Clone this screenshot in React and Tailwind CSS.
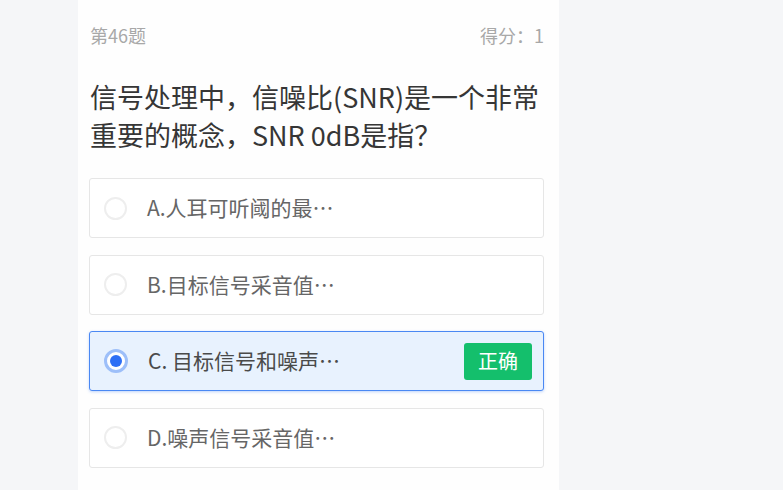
import React from 'react';

const options = [
  { key: 'A', text: 'A.人耳可听阈的最…' },
  { key: 'B', text: 'B.目标信号采音值…' },
  { key: 'C', text: 'C. 目标信号和噪声…', selected: true, correct: true },
  { key: 'D', text: 'D.噪声信号采音值…' },
];

const font = { fontFamily: '"Noto Sans CJK SC", "Noto Sans", sans-serif' };

const Option = ({ opt }) => {
  const box = opt.selected
    ? 'border-[#4a88f3] bg-[#e8f2fe] shadow-[0_1px_3px_rgba(74,136,243,0.35)]'
    : 'border-[#e6e6e6] bg-white';
  return (
    <div className={`flex items-center h-[60px] rounded-[3px] border pl-[14px] pr-[11px] ${box}`}>
      {opt.selected ? (
        <span className="flex items-center justify-center w-[24px] h-[24px] rounded-full border-[3px] border-[#9dbff9] bg-white">
          <span className="w-[12px] h-[12px] rounded-full bg-[#2d6ff5]" />
        </span>
      ) : (
        <span className="w-[23px] h-[23px] rounded-full border-2 border-[#eeeeee]" />
      )}
      <span className={`ml-[20px] text-[21px] ${opt.selected ? 'text-[#4a4a4a]' : 'text-[#666666]'}`}>
        {opt.text}
      </span>
      {opt.correct && (
        <span className="ml-auto flex items-center justify-center w-[68px] h-[37px] rounded-[3px] bg-[#14bf6c] text-white text-[20px]">
          正确
        </span>
      )}
    </div>
  );
};

const App = () => {
  return (
    <div className="w-full h-[490px] bg-[#f5f6f8] overflow-hidden" style={font}>
      <div className="ml-[78px] w-[481px] h-full bg-[#fefefe] pl-[11px] pr-[15px] pt-[24px]">
        {/* header */}
        <div className="flex items-center justify-between h-[22px] pl-[1px] text-[18px] text-[#a8a8a8]">
          <span>第46题</span>
          <span>得分：1</span>
        </div>

        {/* question */}
        <p className="mt-[32px] pl-[1px] text-[27px] leading-[38px] text-[#363636]">
          信号处理中，信噪比(SNR)是一个非常
          <br />
          重要的概念，SNR 0dB是指？
        </p>

        {/* options */}
        <div className="mt-[24px] flex flex-col gap-[16.5px]">
          {options.map((opt) => (
            <Option key={opt.key} opt={opt} />
          ))}
        </div>
      </div>
    </div>
  );
};

export default App;
